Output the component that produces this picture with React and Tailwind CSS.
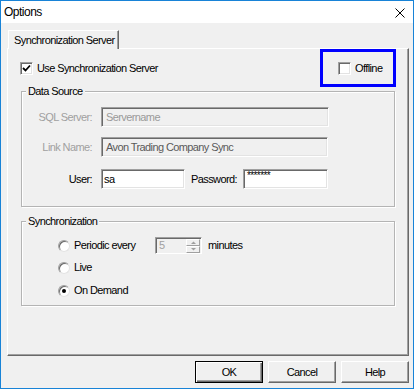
import { Fragment } from "react";

function CheckBox({ checked }) {
  return (
    <span className="flex h-[13px] w-[13px] items-center justify-center border border-t-[#a0a0a0] border-l-[#a0a0a0] border-b-white border-r-white bg-white shadow-[inset_1px_1px_0_#696969,inset_-1px_-1px_0_#e3e3e3]">
      {checked && (
        <svg width="9" height="9" viewBox="0 0 9 9">
          <path d="M1 4 L3.5 6.5 L8 1.5" fill="none" stroke="#000" strokeWidth="1.8" />
        </svg>
      )}
    </span>
  );
}

function Radio({ checked, label }) {
  return (
    <div className="flex h-[17px] items-center">
      <span className="flex h-[12px] w-[12px] items-center justify-center rounded-full border border-t-[#a0a0a0] border-l-[#a0a0a0] border-b-[#e3e3e3] border-r-[#e3e3e3] bg-white shadow-[inset_1px_1px_0_#696969]">
        {checked && <span className="h-[4px] w-[4px] rounded-full bg-black" />}
      </span>
      <span className="ml-[4px]">{label}</span>
    </div>
  );
}

function TextBox({ value, disabled, width, className = "" }) {
  return (
    <div
      className={`flex h-[20px] items-center border border-t-[#a0a0a0] border-l-[#a0a0a0] border-b-white border-r-white shadow-[inset_1px_1px_0_#696969,inset_-1px_-1px_0_#e3e3e3] ${
        disabled ? "bg-[#f0f0f0]" : "bg-white"
      } ${width} ${className}`}
    >
      {value}
    </div>
  );
}

function GroupBox({ title, className, children }) {
  return (
    <div
      className={`relative mx-[1px] border border-[#b4b4b4] shadow-[inset_1px_1px_0_#fff,1px_1px_0_#fff] ${className}`}
    >
      <span className="absolute -top-[7px] left-[4px] bg-[#f0f0f0] px-[2px] leading-[13px]">{title}</span>
      {children}
    </div>
  );
}

function Button({ label, primary }) {
  return (
    <button
      className={`h-[22px] w-[68px] bg-[#f0f0f0] ${
        primary
          ? "border border-black shadow-[inset_1px_1px_0_#fff,inset_-1px_-1px_0_#696969,inset_-2px_-2px_0_#a0a0a0]"
          : "border border-t-white border-l-white border-b-[#696969] border-r-[#696969] shadow-[inset_-1px_-1px_0_#a0a0a0]"
      }`}
    >
      {label}
    </button>
  );
}

export default function App() {
  const sourceRows = [
    { label: "SQL Server:", value: "Servername", color: "text-[#9a9a9a]", width: "w-[228px]", mt: "mt-0" },
    { label: "Link Name:", value: "Avon Trading Company Sync", color: "text-[#5a5a5a]", width: "w-[227px]", mt: "mt-[10px]" },
  ];

  return (
    <div className="flex h-[389px] w-[414px] flex-col border border-[#1883d7] bg-[#f0f0f0] font-['Liberation_Sans',Arial,sans-serif] text-[11px] tracking-[-0.6px] text-black">
      <div className="flex h-[22px] items-center justify-between bg-white pl-[3px] pr-[8px]">
        <span className="text-[12px] tracking-[-0.5px]">Options</span>
        <svg width="10" height="10" viewBox="0 0 10 10" className="mt-[2px]">
          <path d="M0.5 0.5 L9.5 9.5 M9.5 0.5 L0.5 9.5" stroke="#000" strokeWidth="1" />
        </svg>
      </div>

      <div className="flex flex-1 flex-col pl-[6px] pr-[4px] pt-[7px]">
        <div className="flex pl-[1px]">
          <div className="relative z-10 -mb-px flex h-[19px] w-[111px] items-center border-l border-t border-white bg-[#f0f0f0] pl-[5px] shadow-[inset_-1px_0_0_#a0a0a0] border-r border-r-[#696969]">
            Synchronization Server
          </div>
        </div>

        <div className="flex h-[308px] flex-col border-l border-t border-white border-b border-r border-b-[#696969] border-r-[#696969] px-[12px] shadow-[inset_-1px_-1px_0_#a0a0a0]">
          <div className="flex h-[38px] items-center justify-between">
            <div className="flex items-center">
              <CheckBox checked />
              <span className="ml-[4px]">Use Synchronization Server</span>
            </div>
            <div className="flex h-[38px] w-[76px] items-center border-[3px] border-[#0000ff] pl-[15px]">
              <CheckBox />
              <span className="ml-[4px]">Offline</span>
            </div>
          </div>

          <GroupBox title="Data Source" className="mt-[4px] h-[116px] pt-[15px]">
            {sourceRows.map((row) => (
              <Fragment key={row.label}>
                <div className={`flex items-center ${row.mt}`}>
                  <span className="w-[70px] text-right text-[#a0a0a0]">{row.label}</span>
                  <TextBox
                    disabled
                    width={row.width}
                    className={`ml-[9px] pl-[4px] ${row.color}`}
                    value={row.value}
                  />
                </div>
              </Fragment>
            ))}
            <div className="mt-[12px] flex items-center">
              <span className="w-[70px] text-right">User:</span>
              <TextBox width="w-[84px]" className="ml-[9px] pl-[2px]" value="sa" />
              <span className="w-[55px] pr-[3px] text-right">Password:</span>
              <TextBox
                width="w-[85px]"
                className="ml-[3px] items-start pl-[3px] text-[10px] leading-[12px]"
                value="*******"
              />
            </div>
          </GroupBox>

          <GroupBox title="Synchronization" className="mt-[14px] h-[85px] pl-[36px] pt-[15px]">
            <div className="flex items-center">
              <div className="w-[97px]">
                <Radio label="Periodic every" />
              </div>
              <div className="flex h-[17px] w-[47px] border border-t-[#a0a0a0] border-l-[#a0a0a0] border-b-white border-r-white bg-[#f0f0f0] shadow-[inset_1px_1px_0_#696969]">
                <span className="flex flex-1 items-center pl-[3px] text-[#a0a0a0]">5</span>
                <div className="flex w-[15px] flex-col pr-px pt-px">
                  {[0, 1].map((i) => (
                    <div
                      key={i}
                      className="flex h-[7px] items-center justify-center border border-t-white border-l-white border-b-[#a0a0a0] border-r-[#a0a0a0] bg-[#f0f0f0]"
                    >
                      <svg width="5" height="3" viewBox="0 0 5 3">
                        <path d={i === 0 ? "M0 3 L2.5 0.5 L5 3 Z" : "M0 0 L2.5 2.5 L5 0 Z"} fill="#a0a0a0" />
                      </svg>
                    </div>
                  ))}
                </div>
              </div>
              <span className="ml-[6px]">minutes</span>
            </div>
            <div className="mt-[5px]">
              <Radio label="Live" />
            </div>
            <div className="mt-[6px]">
              <Radio checked label="On Demand" />
            </div>
          </GroupBox>
        </div>

        <div className="mt-[5px] flex justify-end gap-[5px]">
          <Button label="OK" primary />
          <Button label="Cancel" />
          <Button label="Help" />
        </div>
      </div>
    </div>
  );
}
